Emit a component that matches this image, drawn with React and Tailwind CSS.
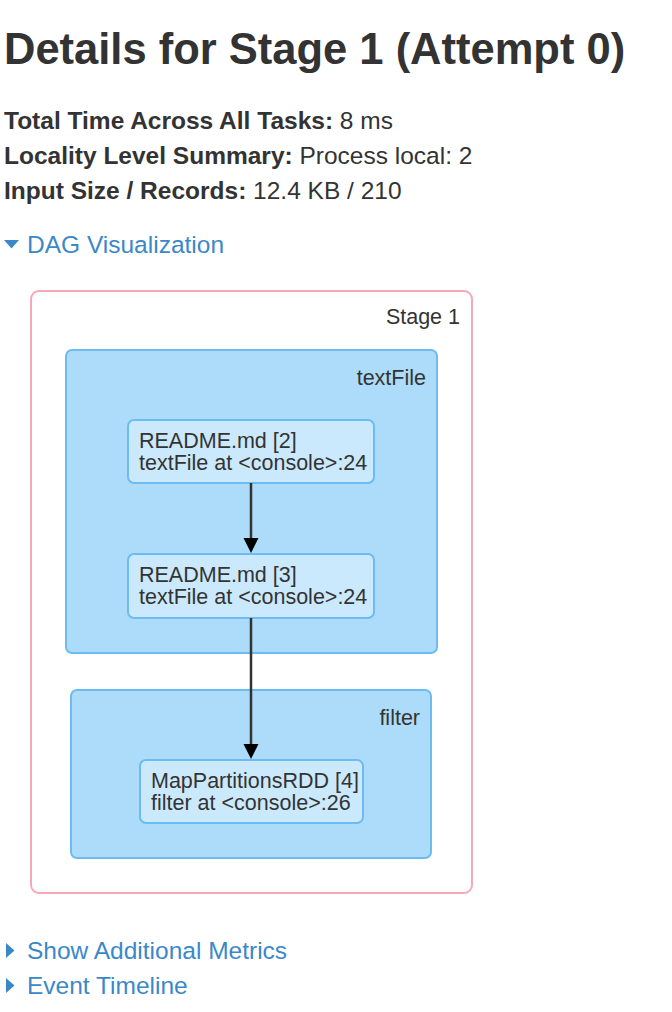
import React from "react";

function Node({ className, title, sub }) {
  return (
    <div className={`absolute rounded-[7px] border-2 border-[#6cbcf2] bg-[#cbe9fd] pl-[10px] pt-[9px] text-[21.5px] leading-[22px] text-[#333] ${className}`}>
      <div>{title}</div>
      <div>{sub}</div>
    </div>
  );
}

function Cluster({ className, label }) {
  return (
    <div className={`absolute rounded-[7px] border-2 border-[#6cbcf2] bg-[#addcfa] ${className}`}>
      <div className="absolute right-[10px] top-[15px] text-[21.5px] leading-[24px] text-[#333]">{label}</div>
    </div>
  );
}

function Toggle({ open, children }) {
  return (
    <div className="flex items-center text-[#3b88c9]">
      <span className="flex w-[23px] items-center">
        {open ? (
          <svg width="15" height="9" viewBox="0 0 15 9">
            <polygon points="0,0 15,0 7.5,8.5" fill="#3b88c9" />
          </svg>
        ) : (
          <svg width="9" height="15" viewBox="0 0 9 15" className="ml-[2px]">
            <polygon points="0,0 8.5,7.5 0,15" fill="#3b88c9" />
          </svg>
        )}
      </span>
      <span>{children}</span>
    </div>
  );
}

export default function App() {
  return (
    <div className="min-h-[1012px] bg-white pl-[4px] pt-[26px] font-['Liberation_Sans',Arial,sans-serif] text-[#333]">
      <h1 className="text-[43.5px] font-bold leading-[46px]">Details for Stage 1 (Attempt 0)</h1>
      <ul className="mt-[31px] text-[24.5px] leading-[35px]">
        <li><strong>Total Time Across All Tasks:</strong> 8 ms</li>
        <li><strong>Locality Level Summary:</strong> Process local: 2</li>
        <li><strong>Input Size / Records:</strong> 12.4 KB / 210</li>
      </ul>
      <div className="mt-[19px] text-[24.5px] leading-[35px]">
        <Toggle open>DAG Visualization</Toggle>
      </div>
      <div className="relative ml-[26px] mt-[28px] h-[604px] w-[443px] rounded-[9px] border-2 border-[#f5a9b8]">
        <div className="absolute right-[11px] top-[13px] text-[21.5px] leading-[24px]">Stage 1</div>
        <Cluster className="left-[33px] top-[57px] h-[305px] w-[373px]" label="textFile" />
        <Cluster className="left-[38px] top-[397px] h-[170px] w-[362px]" label="filter" />
        <Node className="left-[95px] top-[127px] h-[65px] w-[248px]" title="README.md [2]" sub="textFile at <console>:24" />
        <Node className="left-[95px] top-[261px] h-[66px] w-[248px]" title="README.md [3]" sub="textFile at <console>:24" />
        <Node className="left-[107px] top-[467px] h-[65px] w-[225px]" title="MapPartitionsRDD [4]" sub="filter at <console>:26" />
        <svg className="absolute left-[-2px] top-[-2px]" width="443" height="604" viewBox="0 0 443 604">
          <line x1="221" y1="193" x2="221" y2="250" stroke="#333" strokeWidth="2.5" />
          <polygon points="213.5,248 228.5,248 221,263" fill="#000" />
          <line x1="221" y1="328" x2="221" y2="456" stroke="#333" strokeWidth="2.5" />
          <polygon points="213.5,454 228.5,454 221,469" fill="#000" />
        </svg>
      </div>
      <div className="mt-[39px] text-[24.5px] leading-[35px]">
        <Toggle>Show Additional Metrics</Toggle>
        <Toggle>Event Timeline</Toggle>
      </div>
    </div>
  );
}
